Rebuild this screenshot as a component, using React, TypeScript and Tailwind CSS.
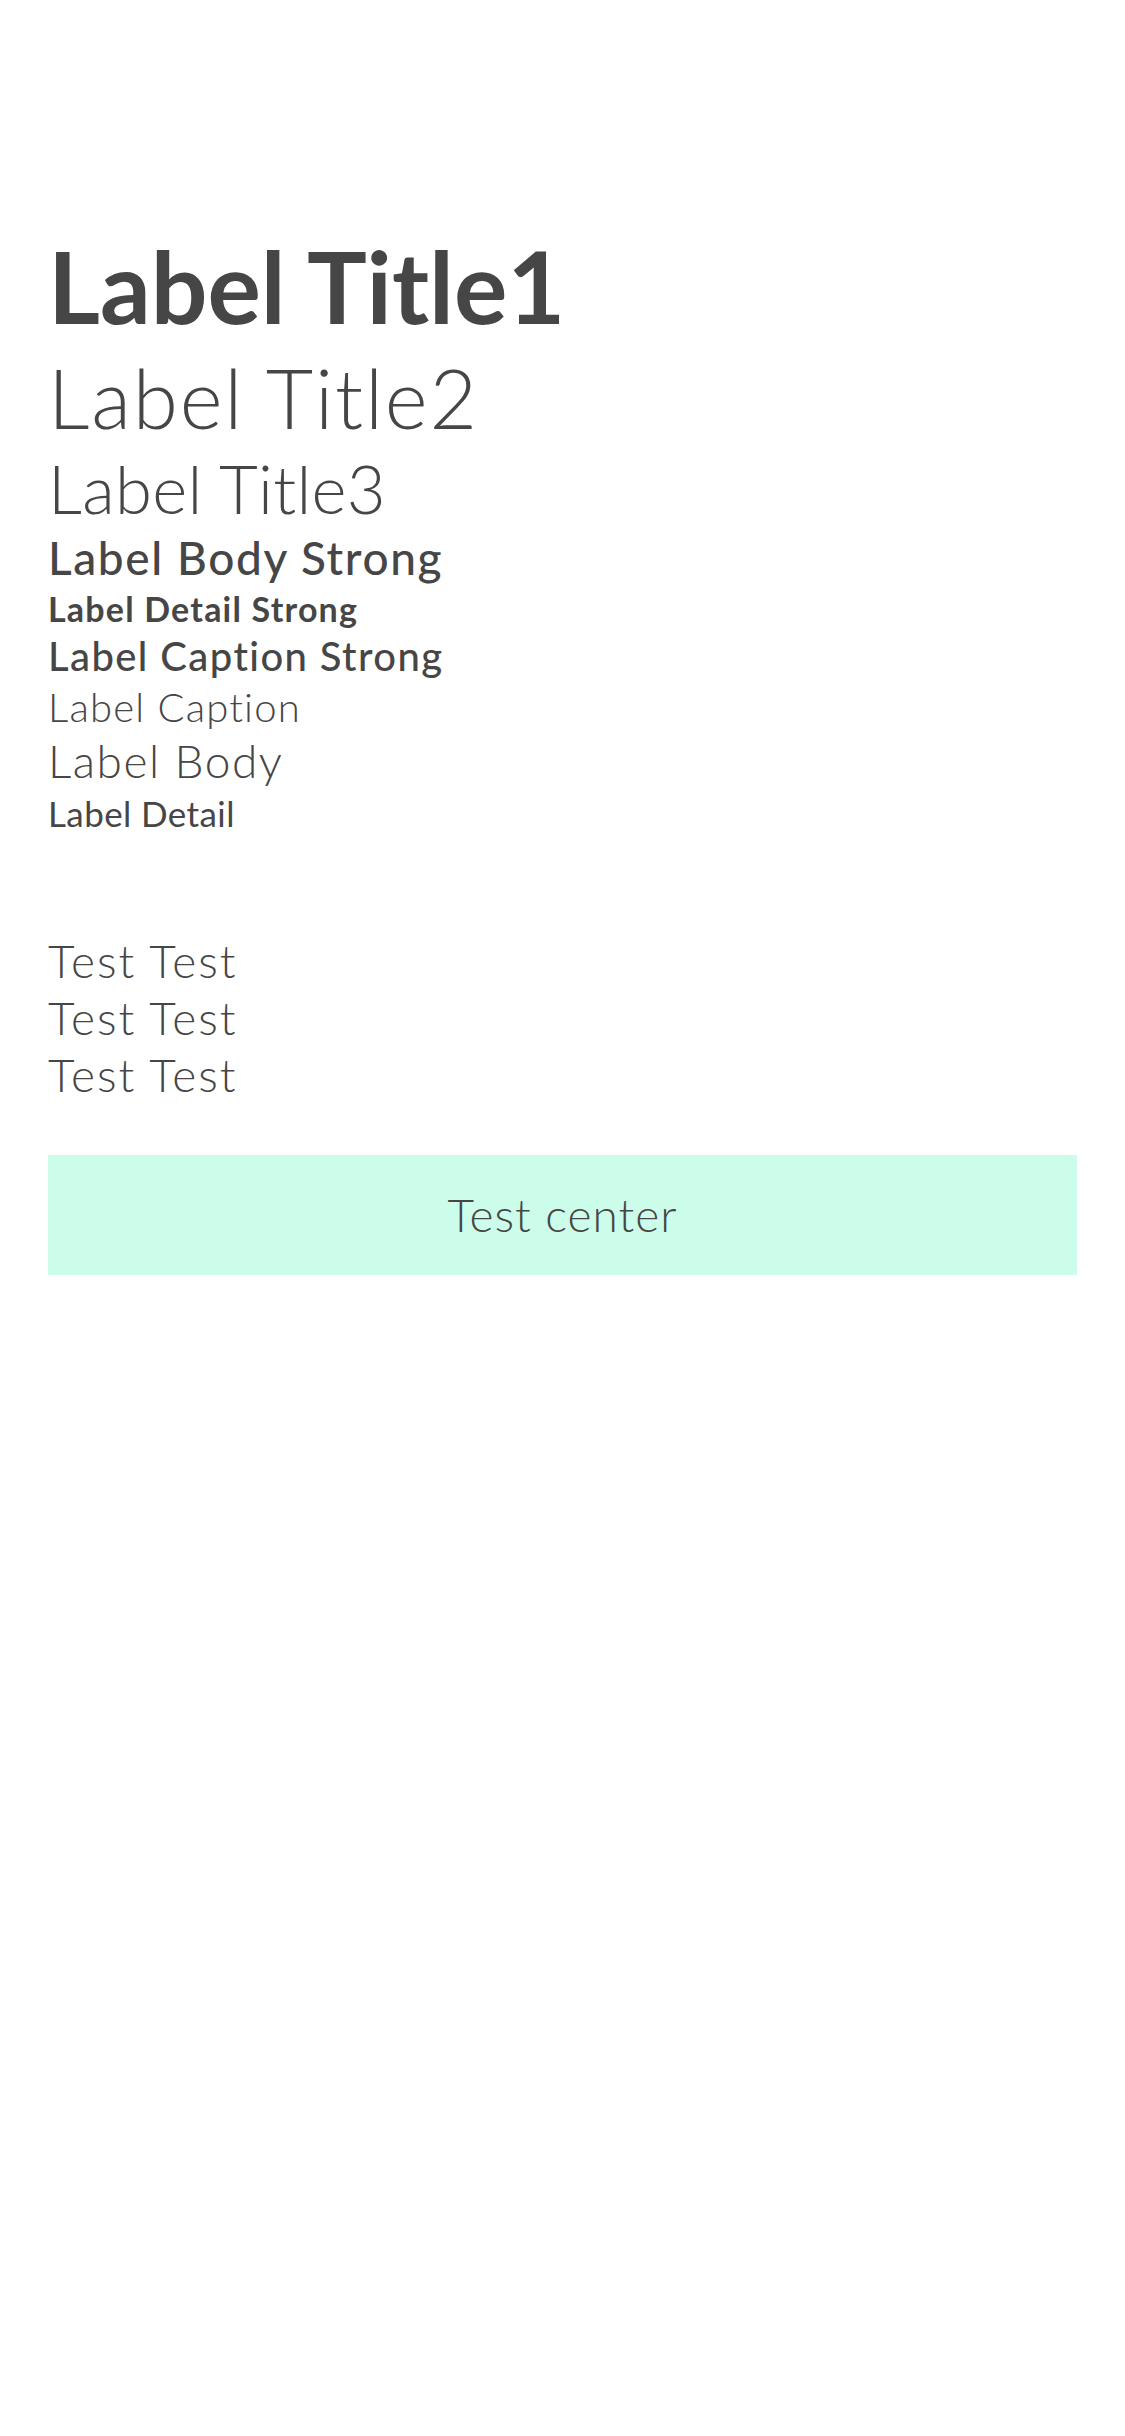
import React from 'react';

const labels: { text: string; cls: string }[] = [
  { text: 'Label Title1', cls: 'mt-0 text-[100px] font-bold' },
  { text: 'Label Title2', cls: 'mt-[21px] text-[82px] font-light tracking-[1.8px]' },
  { text: 'Label Title3', cls: 'mt-[17px] text-[67px] font-light tracking-[0.3px]' },
  { text: 'Label Body Strong', cls: 'mt-[13px] text-[46px] font-medium tracking-[1.6px]' },
  { text: 'Label Detail Strong', cls: 'mt-[11px] text-[34px] font-bold tracking-[1.2px]' },
  { text: 'Label Caption Strong', cls: 'mt-[10px] text-[40px] font-medium tracking-[1.4px]' },
  { text: 'Label Caption', cls: 'mt-[11px] text-[40px] font-light tracking-[1.2px]' },
  { text: 'Label Body', cls: 'mt-[11px] text-[46px] font-light tracking-[1.5px]' },
  { text: 'Label Detail', cls: 'mt-[12px] text-[35px] font-normal tracking-[0.4px]' },
];

export default function App() {
  return (
    <div className="min-h-[2436px] w-full bg-white px-12 pt-[235px] text-[#464646] font-['Lato','Noto_Sans',sans-serif] [font-variant-ligatures:none]">
      {/* type scale */}
      <div className="flex flex-col">
        {labels.map((l) => (
          <div key={l.text} className={`leading-none ${l.cls}`}>
            {l.text}
          </div>
        ))}
      </div>

      {/* plain lines */}
      <div className="mt-[107px] flex flex-col gap-[11px] text-[46px] font-light leading-none tracking-[2px]">
        <div>Test Test</div>
        <div>Test Test</div>
        <div>Test Test</div>
      </div>

      <div className="mt-[57px] flex h-[120px] items-center justify-center bg-[#ccfdea] text-[46px] font-light leading-none tracking-[1px]">
        Test center
      </div>
    </div>
  );
}
